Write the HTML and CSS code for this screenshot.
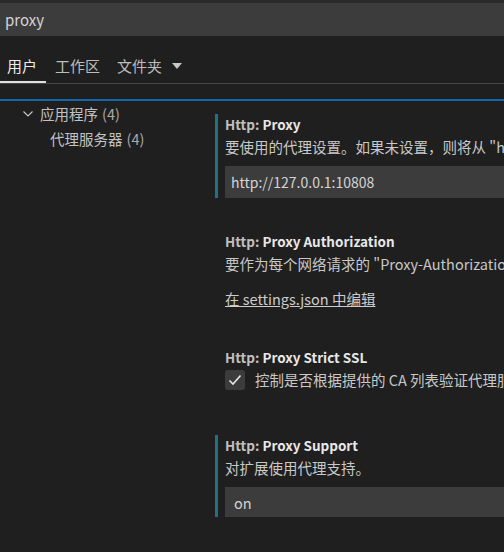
FILE: index.html
```html
<!DOCTYPE html>
<html lang="zh">
<head>
<meta charset="utf-8">
<link rel="stylesheet" href="styles.css">
</head>
<body>
<div class="top-strip"></div>
<div class="search">proxy</div>
<div class="tabs">
  <div class="tab active">用户</div>
  <div class="tab">工作区</div>
  <div class="tab">文件夹 <span class="caret"></span></div>
</div>
<div class="focus-line"></div>
<div class="main">
  <div class="tree">
    <div class="row group">
      <svg class="chev" width="12" height="12" viewBox="0 0 12 12"><path d="M1.5 3.5 L6 8 L10.5 3.5" fill="none" stroke="#c5c5c5" stroke-width="1.2"/></svg>
      <span>应用程序</span><span class="count">(4)</span>
    </div>
    <div class="row child"><span>代理服务器</span><span class="count">(4)</span></div>
  </div>
  <div class="settings">
    <div class="setting modified">
      <div class="title"><span class="cat">Http: </span><span class="key">Proxy</span></div>
      <div class="desc">要使用的代理设置。如果未设置，则将从 "http_proxy" 和 "https_proxy" 环境变量中获取。</div>
      <div class="input">http://127.0.0.1:10808</div>
    </div>
    <div class="setting link-item">
      <div class="title"><span class="cat">Http: </span><span class="key">Proxy Authorization</span></div>
      <div class="desc">要作为每个网络请求的 "Proxy-Authorization" 标头发送的值。</div>
      <div class="edit-link">在 settings.json 中编辑</div>
    </div>
    <div class="setting check-item">
      <div class="title"><span class="cat">Http: </span><span class="key">Proxy Strict SSL</span></div>
      <div class="check-row">
        <span class="checkbox"><svg width="16" height="16" viewBox="0 0 16 16"><path d="M2.5 8.5 L6 12 L13.5 3.5" fill="none" stroke="#e8e8e8" stroke-width="1.6"/></svg></span>
        <span class="desc">控制是否根据提供的 CA 列表验证代理服务器证书。</span>
      </div>
    </div>
    <div class="setting modified">
      <div class="title"><span class="cat">Http: </span><span class="key">Proxy Support</span></div>
      <div class="desc">对扩展使用代理支持。</div>
      <div class="select">on</div>
    </div>
  </div>
</div>
</body>
</html>
```
FILE: styles.css
```css
html, body {
  margin: 0;
  padding: 0;
  background: #1f1f1f;
  width: 504px;
  height: 552px;
  overflow: hidden;
}
body {
  font-family: "Noto Sans CJK SC", "Noto Sans", sans-serif;
  font-size: 14.5px;
  color: #cccccc;
}
.top-strip {
  height: 3px;
  background: #2a2a2a;
}
.search {
  height: 33px;
  line-height: 33px;
  background: #3c3c3c;
  padding-left: 5px;
  color: #d4d4d4;
  font-size: 15px;
}
.tabs {
  display: flex;
  height: 47px;
  border-bottom: 1px solid #474747;
}
.tab {
  height: 47px;
  box-sizing: border-box;
  padding: 11px 8px 0 9px;
  color: #bdbdbd;
  font-size: 15px;
  display: flex;
  align-items: center;
  gap: 10px;
}
.tab.active {
  color: #ececec;
  border-bottom: 2px solid #e0e0e0;
  padding: 13px 9px 0 7px;
  width: 46px;
}
.caret {
  width: 0;
  height: 0;
  border-left: 5.5px solid transparent;
  border-right: 5.5px solid transparent;
  border-top: 6px solid #c8c8c8;
  margin-top: 1px;
}
.focus-line {
  height: 2px;
  margin-top: 15px;
  background: #1469ad;
}
.main {
  display: grid;
  grid-template-columns: 215px 1fr;
}
.row {
  height: 25px;
  line-height: 25px;
  display: flex;
  align-items: center;
  color: #c2c2c2;
  white-space: nowrap;
}
.row .count {
  margin-left: 4px;
  color: #aaaaaa;
}
.group { padding-left: 22px; }
.chev { margin-right: 6px; }
.child { padding-left: 50px; }
.settings {
  display: flex;
  flex-direction: column;
  gap: 33px;
  padding-top: 13px;
  overflow: hidden;
  white-space: nowrap;
}
.setting {
  border-left: 3px solid transparent;
  padding-left: 7px;
}
.setting.modified {
  border-left-color: #1f7186;
}
.title {
  line-height: 20px;
  font-weight: 700;
  font-size: 13.5px;
}
.cat { color: #c0c0c0; }
.key { color: #e8e8e8; }
.desc {
  line-height: 20px;
  margin-top: 3px;
  color: #c8c8c8;
}
.input, .select {
  margin-top: 9px;
  width: 520px;
  background: #3c3c3c;
  color: #d4d4d4;
  box-sizing: border-box;
}
.input {
  height: 32px;
  line-height: 32px;
  padding-left: 6px;
  font-size: 14px;
}
.select {
  height: 30px;
  line-height: 31px;
  padding-left: 9px;
}
.link-item { padding-bottom: 5px; }
.edit-link {
  margin-top: 15px;
  line-height: 20px;
  text-decoration: underline;
  color: #cccccc;
}
.check-item { padding-bottom: 12px; }
.check-row {
  display: flex;
  align-items: center;
  gap: 10px;
  margin-top: 3px;
}
.check-row .desc { margin-top: 0; }
.checkbox {
  flex-shrink: 0;
  width: 20px;
  height: 20px;
  background: #3c3c3c;
  border-radius: 3px;
  display: flex;
  align-items: center;
  justify-content: center;
}
```
